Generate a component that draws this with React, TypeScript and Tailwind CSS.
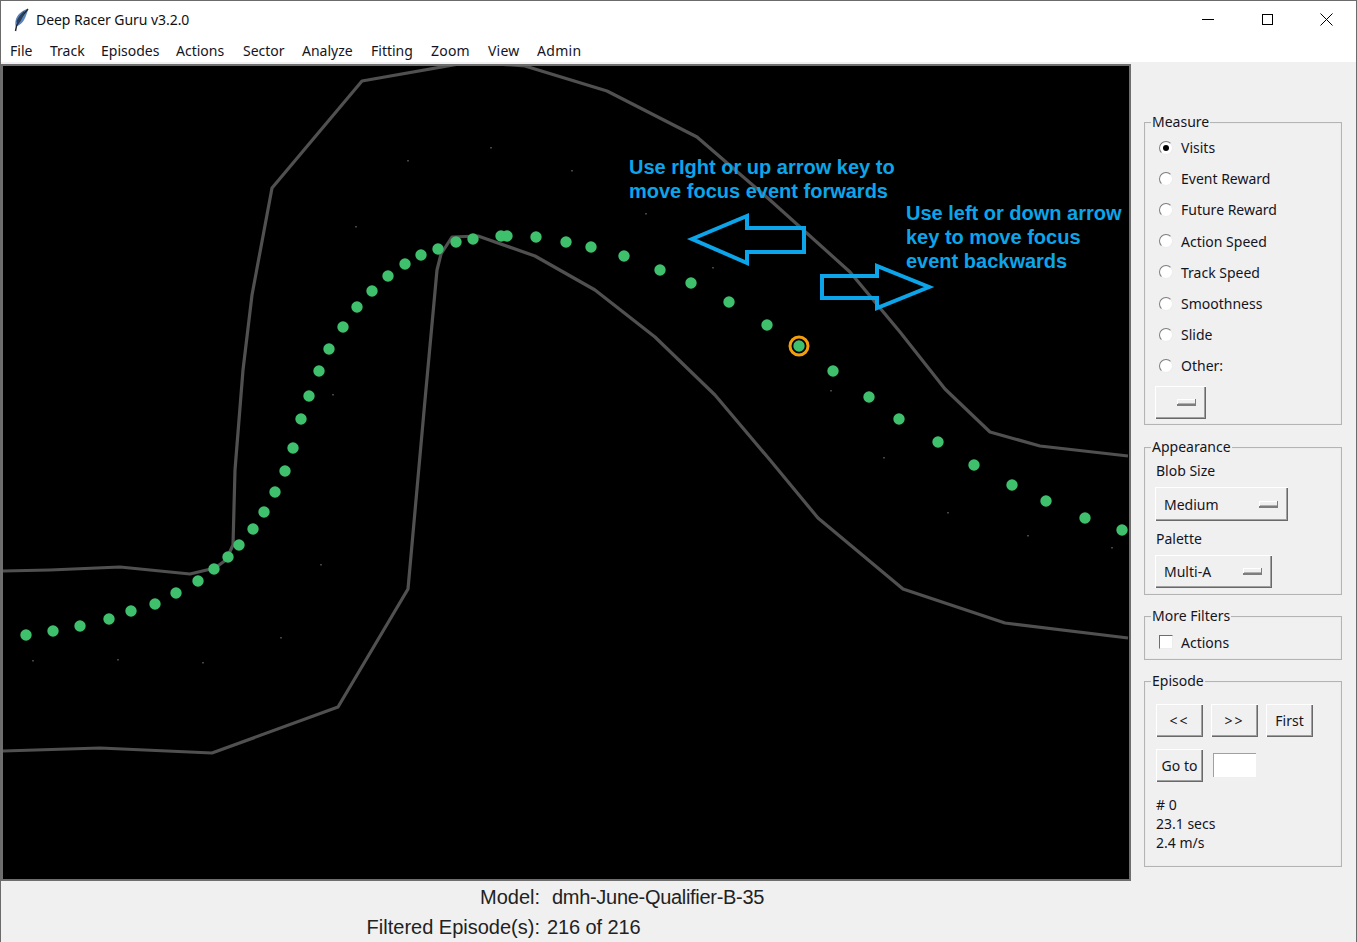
const font = "font-['Noto_Sans','Open_Sans',sans-serif]";
const menus: [string, string][] = [["File", "w-[40px]"], ["Track", "w-[51px]"], ["Episodes", "w-[75px]"], ["Actions", "w-[67px]"], ["Sector", "w-[59px]"], ["Analyze", "w-[69px]"], ["Fitting", "w-[60px]"], ["Zoom", "w-[57px] tracking-[0.2px]"], ["View", "w-[49px] tracking-[0.2px]"], ["Admin", "w-[60px] tracking-[0.3px]"]];
const radios = ["Visits", "Event Reward", "Future Reward", "Action Speed", "Track Speed", "Smoothness", "Slide", "Other:"];
const dots = [[26,635],[53,631],[80,626],[109,619],[131,611],[155,604],[176,593],[198,581],[214,569],[228,557],[239,545],[253,529],[264,512],[275,492],[285,471],[293,448],[301,419],[309,396],[319,371],[329,349],[343,327],[357,307],[372,291],[388,276],[405,264],[421,255],[438,249],[456,242],[473,239],[501,236],[507,236],[536,237],[566,242],[591,247],[624,256],[660,270],[691,283],[729,302],[767,325],[799,346],[833,371],[869,397],[899,419],[938,442],[974,465],[1012,485],[1046,501],[1085,518],[1122,530]];
const specks = [[407,160],[490,147],[571,170],[355,226],[645,213],[712,267],[830,390],[883,457],[947,512],[1027,535],[1111,547],[320,564],[280,637],[202,662],[117,659],[32,660],[332,394]];
const raised = "bg-[#f0f0f0] shadow-[inset_1px_1px_0_#ffffff,inset_-1px_-1px_0_#696969,inset_-2px_-2px_0_#a0a0a0]";

function Group({ title, className, children }: { title: string; className: string; children: React.ReactNode }) {
  return (
    <div className={`relative border border-[#b4b4b4] shadow-[inset_0_0_0_0.5px_#e8e8e8] ${className}`}>
      <span className="absolute left-[6px] top-[-11px] bg-[#f0f0f0] px-px text-[14px] leading-[19px]">{title}</span>
      {children}
    </div>
  );
}

function Indicator() {
  return <span className="block h-[7px] w-[19px] border-b-2 border-r border-[#7d7d7d] bg-[#f0f0f0] shadow-[inset_1px_1px_0_#fff,inset_0_-1px_0_#b0b0b0]" />;
}

function Radio({ label, checked }: { label: string; checked?: boolean }) {
  return (
    <div className="flex h-[31.2px] items-center">
      <span className="ml-[14px] flex h-[14px] w-[14px] items-center justify-center rounded-full border border-b-[#ececec] border-l-[#7c7c7c] border-r-[#ececec] border-t-[#7c7c7c] bg-white">
        {checked && <span className="h-[6px] w-[6px] rounded-full bg-black" />}
      </span>
      <span className="ml-[8px] text-[14px]">{label}</span>
    </div>
  );
}

function Btn({ children, className }: { children: React.ReactNode; className: string }) {
  return <div className={`flex items-center justify-center text-[14px] ${raised} ${className}`}>{children}</div>;
}

export default function App() {
  return (
    <div className={`flex h-[942px] w-[1357px] flex-col overflow-hidden border-x border-t border-[#6b6b6b] bg-[#f0f0f0] text-[#14141e] ${font}`}>
      <div className="flex h-[38px] items-center bg-white pb-[1px]">
        <svg width="16" height="24" viewBox="0 0 16 24" className="ml-[12px]">
          <path d="M15 1C9 2 3.500 7 2.500 13c-.4 2.400-.2 4.200.4 5.400C7 17.500 10.500 14 12.500 9c1.200-3 2.300-6 2.500-8z" fill="#5a84bc" />
          <path d="M15 1C10.500 6 6 12 3.500 18L2.500 23" stroke="#20242c" strokeWidth="1.400" fill="none" />
          <path d="M3.500 13c2-4 5-8 8-10.500-1 5-3 10.500-7 14.500z" fill="#2c3e58" />
        </svg>
        <span className="ml-[7px] text-[14px] tracking-[-0.05px] text-[#111]">Deep Racer Guru v3.2.0</span>
        <div className="ml-auto flex items-center">
          <svg width="13" height="13" viewBox="0 0 13 13" className="mr-[46px]"><path d="M0 6.500h12" stroke="#000" /></svg>
          <svg width="13" height="13" viewBox="0 0 13 13" className="mr-[46px]"><rect x="1.500" y="1.500" width="10" height="10" fill="none" stroke="#000" /></svg>
          <svg width="13" height="13" viewBox="0 0 13 13" className="mr-[23px]"><path d="M.5.500l12 12M12.500.500l-12 12" stroke="#000" /></svg>
        </div>
      </div>
      <div className="flex h-[23px] items-center bg-white pl-[9px] text-[14px]">
        {menus.map(([m, w]) => <span key={m} className={w}>{m}</span>)}
      </div>
      <div className="h-[2px] shrink-0" />
      <div className="flex h-[817px] shrink-0">
        <div className="relative h-full w-[1130px] shrink-0 border-2 border-[#6e6e6e] bg-black">
          <svg viewBox="3 66 1126 813" className="block h-full w-full">
            <g fill="none" stroke="#505050" strokeWidth="3.200" strokeLinejoin="round">
              <polyline points="3,571 50,570 120,567 190,574 215,568 226,560 233,545 235,470 243,370 252,295 272,188 362,81 470,62 525,66 607,91 697,137 770,200 850,272 900,332 945,389 990,432 1040,446 1128,456" />
              <polyline points="3,751 100,748 212,753 338,707 408,589 425,400 437,270 441,254 452,237 478,236 535,256 595,290 655,337 715,395 770,460 818,518 903,589 1005,623 1128,638" />
            </g>
            {specks.map(([x, y]) => <rect key={`${x}-${y}`} x={x} y={y} width="2" height="1.500" fill="#444" />)}
            {dots.map(([x, y]) => <circle key={`${x}-${y}`} cx={x} cy={y} r="5.700" fill="#3fc06c" />)}
            <circle cx="799" cy="346" r="9" fill="none" stroke="#f59e0b" strokeWidth="3" />
            <g fill="none" stroke="#0ca5ea" strokeWidth="4" strokeLinejoin="miter">
              <polygon points="692,239 747,216 747,228 804,228 804,252 747,252 747,263" />
              <polygon points="822,276 877,276 877,266 929,287 877,308 877,298 822,298" />
            </g>
          </svg>
          <div className="absolute left-[626px] top-[89px] font-['Liberation_Sans',Arial,sans-serif] text-[20px] font-bold leading-[24px] text-[#0ca5ea]">
            Use rIght or up arrow key to<br />move focus event forwards
          </div>
          <div className="absolute left-[903px] top-[135px] font-['Liberation_Sans',Arial,sans-serif] text-[20px] font-bold leading-[24px] text-[#0ca5ea]">
            Use left or down arrow<br />key to move focus<br />event backwards
          </div>
        </div>
        <div className="ml-[13px] flex w-[198px] flex-col pt-[58px]">
          <Group title="Measure" className="h-[303px] pt-[9px]">
            {radios.map((r, i) => <Radio key={r} label={r} checked={i === 0} />)}
            <div className={`ml-[10px] mt-[4px] flex h-[33px] w-[51px] items-center justify-end pr-[10px] ${raised}`}><Indicator /></div>
          </Group>
          <Group title="Appearance" className="mt-[22px] h-[148px] pl-[11px] pt-[13px]">
            <div className="text-[14px] leading-[19px]">Blob Size</div>
            <div className={`-ml-px mt-[7px] flex h-[34px] w-[133px] items-center justify-between pl-[9px] pr-[10px] text-[14px] ${raised}`}>Medium<Indicator /></div>
            <div className="mt-[8px] text-[14px] leading-[19px]">Palette</div>
            <div className={`-ml-px mt-[7px] flex h-[33px] w-[117px] items-center justify-between pl-[9px] pr-[10px] text-[14px] ${raised}`}>Multi-A<Indicator /></div>
          </Group>
          <Group title="More Filters" className="mt-[21px] flex h-[44px] items-center pt-[8px]">
            <span className="ml-[14px] h-[14px] w-[14px] border border-b-[#ececec] border-l-[#6e6e6e] border-r-[#ececec] border-t-[#6e6e6e] bg-white" />
            <span className="ml-[8px] text-[14px]">Actions</span>
          </Group>
          <Group title="Episode" className="mt-[21px] h-[186px] pl-[11px] pt-[22px]">
            <div className="flex gap-[8px]">
              <Btn className="h-[33px] w-[47px] text-[13px] tracking-[2px]">&lt;&lt;</Btn>
              <Btn className="h-[33px] w-[47px] text-[13px] tracking-[2px]">&gt;&gt;</Btn>
              <Btn className="h-[33px] w-[47px]">First</Btn>
            </div>
            <div className="mt-[12px] flex items-start">
              <Btn className="h-[33px] w-[47px]">Go to</Btn>
              <div className="ml-[10px] mt-[4px] h-[24px] w-[43px] border-l border-t border-[#a0a0a0] bg-white" />
            </div>
            <div className="mt-[13px] text-[14px] leading-[19px]">
              <div># 0</div>
              <div>23.1 secs</div>
              <div>2.4 m/s</div>
            </div>
          </Group>
        </div>
      </div>
      <div className="flex flex-col pt-[1px] font-['Liberation_Sans',Arial,sans-serif] text-[20px] text-[#222]">
        <div className="flex h-[30px] items-center">
          <span className="w-[539px] text-right">Model:</span>
          <span className="ml-[12px] tracking-[-0.3px]">dmh-June-Qualifier-B-35</span>
        </div>
        <div className="flex h-[30px] items-center">
          <span className="w-[539px] text-right">Filtered Episode(s):</span>
          <span className="ml-[7px] tracking-[-0.1px]">216 of 216</span>
        </div>
      </div>
    </div>
  );
}
